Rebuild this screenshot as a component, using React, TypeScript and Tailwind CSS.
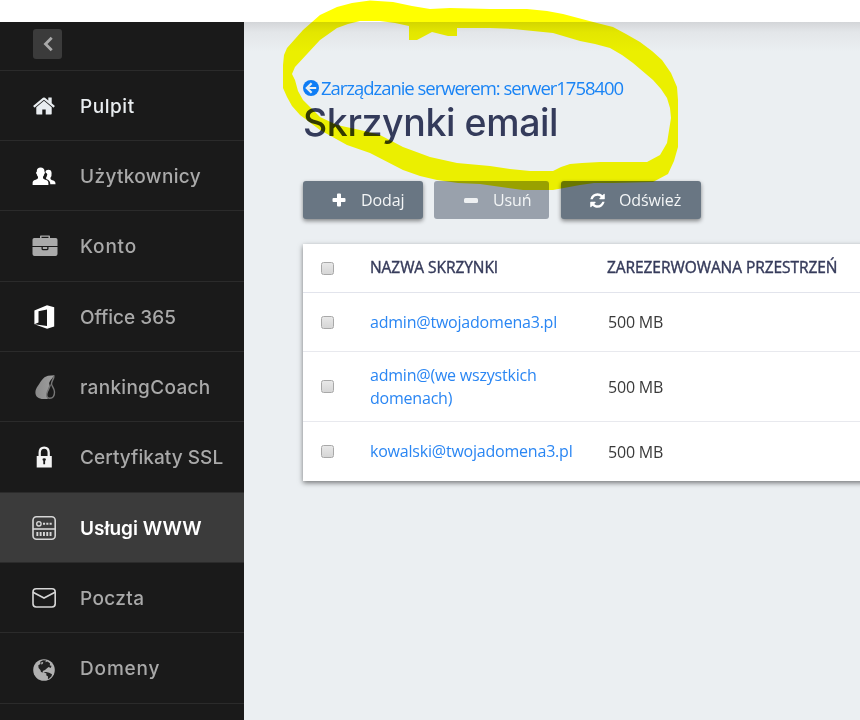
import React from 'react';

const HomeIcon = () => (
    <svg viewBox="0 0 1792 1792" className="mt-[2px] h-6 w-6" fill="#e9edf0">
        <path d="M1472 992v480q0 26-19 45t-45 19h-384v-384h-256v384h-384q-26 0-45-19t-19-45v-480q0-1 .5-3t.5-3l575-474 575 474q1 2 1 6zm223-69l-62 74q-8 9-21 11h-3q-13 0-21-7l-692-577-692 577q-12 8-24 7-13-2-21-11l-62-74q-8-10-7-23.5t11-21.5l719-599q32-26 76-26t76 26l244 204v-195q0-14 9-23t23-9h192q14 0 23 9t9 23v408l219 182q10 8 11 21.5t-7 23.5z" />
    </svg>
);

const UsersIcon = () => (
    <svg viewBox="0 0 24 24" className="h-6 w-6" fill="#fff">
        <path d="M4.8 7.2C4.8 4.600 6.200 3.400 8.600 3.400s3.900 1.200 3.900 3.800c0 .7.1.9.4 1.100.2.8-.2 1.600-.7 1.900-.2 1.200-.6 2-1.200 2.600v1.500c.6.8 1.800 1.300 3.200 1.800 1.600.6 2.200 1.500 2.200 3.300v1.600H.6v-1.600c0-1.800.6-2.700 2.200-3.300 1.400-.5 2.600-1 3.200-1.800v-1.500c-.6-.6-1-1.400-1.200-2.600-.5-.3-.9-1.100-.7-1.900.5-.2.700-.4.700-1.100z" />
        <path d="M13.400 8.200c.2-1.700 1.400-2.400 3-2.400 2.100 0 3.200 1.200 3.200 3.300 0 1-.2 1.700-.1 2.300-.2 1.100-.5 1.700-1 2.200v1.300c.6.8 1.500 1.200 2.800 1.700 1.500.6 2.200 1.400 2.200 3.400v.3h-5.200c0-2.600-1.100-3.900-2.800-4.700-.7-.3-1.200-.6-1.400-.9v-1.200c.4-.5.700-1.200.9-2.100.400-.9.300-1.500-.1-2-.6-.4-.9-.6-1.500-1.200z" />
    </svg>
);

const BriefcaseIcon = () => (
    <svg viewBox="0 0 26 24" className="h-6 w-[26px]" fill="#aaa">
        <path fillRule="evenodd" d="M8 4V2.200Q8 1.400 8.800 1.400h8.400q.8 0 .8.8V4h5.800q1.700 0 1.700 1.700V12H.5V5.700Q.5 4 2.200 4zm1.500-1.300V4h7V2.700z" />
        <path d="M.5 12.900h9v1.800q0 1.600 1.600 1.600h3.800q1.600 0 1.600-1.600v-1.800h9v7q0 2-2 2h-21q-2 0-2-2zM10.800 12.900h4.400v2h-4.400z" />
    </svg>
);

const OfficeIcon = () => (
    <svg viewBox="0 0 24 24" className="mt-px h-6 w-6" fill="#fff">
        <path d="M2.400 5.500 15 .3l7.200 2v19.200L15.100 23.700 2.400 19.200l12.600 1.700V4.400L6.500 6.200v11.300l-4.100 1.700z" />
    </svg>
);

const CoachIcon = () => (
    <svg viewBox="0 0 24 24" className="mt-px h-6 w-6">
        <defs>
            <linearGradient id="coach" x1="0" x2="1">
                <stop offset="0" stopColor="#8a8a8a" />
                <stop offset="1" stopColor="#a0a0a0" />
            </linearGradient>
        </defs>
        <path d="M22.500.3 16 .7C10.500 2.200 9 6.500 6.500 10 4 13.500 3.400 15 3.400 17.500c0 4.300 3.200 6.500 8 6.500h4.900c-1.700-1.200-2.200-3.400-1.400-6 1.200-3.500 2.700-5.500 2.300-9C17 6.500 20 4 22.500.3z" fill="url(#coach)" />
        <path d="M21.900.6c.6 2.900-2.700 5.300-2.400 8.400.2 2.300 3 4.300 3 8 0 4-2.100 6.300-4.700 6.300-2.700 0-3.600-2.300-2.800-5.300.8-2.800 2.600-4.900 3.300-8.500" fill="none" stroke="#777" strokeWidth="1.400" />
    </svg>
);

const LockIcon = () => (
    <svg viewBox="0 0 24 24" className="h-6 w-6">
        <path d="M7.700 12V7.600c0-3.200 1.700-5 4.500-5s4.500 1.800 4.500 5V12" fill="none" stroke="#f4f4f4" strokeWidth="2.300" />
        <path d="M4.700 11h15.100v11.500H4.700z" fill="#f4f4f4" />
        <path d="M10.500 14.200q0-1 1.700-1t1.700 1q0 1-.8 1.500v3.600h-1.800v-3.600q-.8-.5-.8-1.500z" fill="#1a1a1a" />
    </svg>
);

const ServerIcon = () => (
    <svg viewBox="0 0 24 24" className="mt-px h-6 w-6" fill="none" stroke="#d6d6d6">
        <rect x="1" y=".8" width="22.200" height="22.400" rx="3.500" strokeWidth="1.600" />
        <path d="M1 13h22" strokeWidth="1.600" />
        <circle cx="6.900" cy="7.800" r="2.200" strokeWidth="1.400" />
        <path d="M11 7.800h9" strokeWidth="1.900" strokeDasharray="2.100 1.200" />
        <path d="M4.400 18h15.500" strokeWidth="4" strokeDasharray="1.900 1.400" />
    </svg>
);

const MailIcon = () => (
    <svg viewBox="0 0 24 24" className="mt-px h-6 w-6" fill="none" stroke="#d6d6d6" strokeWidth="1.600">
        <rect x="1" y="2.700" width="22.200" height="18.300" rx="3.200" />
        <path d="M1 6.200 12 12 23 6.200" />
    </svg>
);

const GlobeIcon = () => (
    <svg viewBox="0 0 24 24" className="mt-px h-6 w-6">
        <circle cx="12" cy="13" r="10.800" fill="#b1b1b1" />
        <path d="M8.200 4.800 11 3.300l3.200.2-1 1.700 2.200-.6 2.600 1.700-.2 2.200 1.700.3-.7 2.200-2.200-.9-1.900 1.300-1.700 1.700-2.300.9.300 1.600-2-.5-.6-2.200-1.800-2-.3-2.600L8.500 7z" fill="#222" />
        <path d="m11.500 15.300 2.600-.3 3 .8 2.900 1.500-.5 1.900-2.600 2.600-1 .3.100-2.600-1.800-1.200.300-1.700z" fill="#222" />
        <path d="m9.300 5.300 2-.4-.7 2-1.400.6z" fill="#b1b1b1" />
    </svg>
);

const menu = [
    { label: 'Pulpit', icon: <HomeIcon />, style: 'text-[#e9edf0] tracking-[0.55px]' },
    { label: 'Użytkownicy', icon: <UsersIcon />, style: 'text-[#a9a9a9] tracking-[0.35px]' },
    { label: 'Konto', icon: <BriefcaseIcon />, style: 'text-[#a9a9a9] tracking-[0.8px]' },
    { label: 'Office 365', icon: <OfficeIcon />, style: 'text-[#a9a9a9]' },
    { label: 'rankingCoach', icon: <CoachIcon />, style: 'text-[#a9a9a9] tracking-[0.3px]' },
    { label: 'Certyfikaty SSL', icon: <LockIcon />, style: 'text-[#a9a9a9] tracking-[0.05px]' },
    { label: 'Usługi WWW', icon: <ServerIcon />, style: 'font-semibold text-white', active: true },
    { label: 'Poczta', icon: <MailIcon />, style: 'text-[#a9a9a9] tracking-[0.35px]' },
    { label: 'Domeny', icon: <GlobeIcon />, style: 'text-[#a9a9a9] tracking-[0.85px]' },
];

const mailboxes = [
    { name: 'admin@twojadomena3.pl', space: '500 MB', height: 'h-[59px]' },
    { name: 'admin@(we wszystkich domenach)', space: '500 MB', height: 'h-[70px]' },
    { name: 'kowalski@twojadomena3.pl', space: '500 MB', height: 'h-[59px]' },
];

const Checkbox = () => (
    <span className="block h-[13px] w-[13px] rounded-[2.5px] border border-[#a8a8a8] bg-linear-to-b from-[#e8e8e8] to-[#d6d6d6]" />
);

const Sidebar = () => (
    <aside className="w-[244px] shrink-0 overflow-hidden bg-[#1a1a1a]">
        <div className="h-[48.7px] border-b border-[#2b2b2b] pt-[7px] pl-[33px]">
            <button className="flex h-[30px] w-[29px] items-center justify-center rounded-[3px] bg-[#3b3b3b]">
                <svg viewBox="0 0 12 16" className="h-4 w-3" fill="none" stroke="#a9a9a9" strokeWidth="2.800">
                    <path d="M9.700 1.800 3.500 8l6.200 6.200" />
                </svg>
            </button>
        </div>
        <nav>
            {menu.map((item) => (
                <a
                    key={item.label}
                    className={`flex h-[70.35px] items-center border-b border-[#2b2b2b] pl-8 text-[19px] font-medium whitespace-nowrap ${item.active ? 'bg-[#3b3b3b]' : ''}`}
                >
                    <span className="flex w-12 shrink-0">{item.icon}</span>
                    <span className={`pt-[3px] ${item.style}`}>{item.label}</span>
                </a>
            ))}
        </nav>
    </aside>
);

const Toolbar = () => (
    <div className="mt-[39px] flex h-[38px] text-[16px] tracking-[-0.1px] text-[#f3f5f6]">
        <button className="flex w-[120px] items-center rounded-[3px] bg-[#697683] pl-[29px] shadow-[0_2px_4px_rgba(0,0,0,0.45)]">
            <svg viewBox="0 0 14 14" className="mr-[15px] h-3.5 w-3.5" fill="#fff">
                <path d="M5 1.500Q5 .5 6 .5h2q1 0 1 1V5h3.500q1 0 1 1v2q0 1-1 1H9v3.500q0 1-1 1H6q-1 0-1-1V9H1.500q-1 0-1-1V6q0-1 1-1H5z" />
            </svg>
            Dodaj
        </button>
        <button className="ml-[11px] flex w-[115px] items-center rounded-[3px] bg-[#99a1ac] pl-[30px]">
            <span className="mr-[15px] h-[5px] w-[14px] rounded-[1.5px] bg-[#eef0f2]" />
            Usuń
        </button>
        <button className="ml-[12px] flex w-[140px] items-center rounded-[3px] bg-[#697683] pl-[28px] shadow-[0_2px_4px_rgba(0,0,0,0.45)]">
            <svg viewBox="0 0 1792 1792" className="mr-[13px] h-[17px] w-[17px]" fill="#fff">
                <path d="M1639 1056q0 5-1 7-64 268-268 434.500t-478 166.500q-146 0-282.500-55t-243.500-157l-129 129q-19 19-45 19t-45-19-19-45v-448q0-26 19-45t45-19h448q26 0 45 19t19 45-19 45l-137 137q71 66 161 102t187 36q134 0 250-65t186-179q11-17 53-117 8-23 30-23h192q13 0 22.500 9.500t9.500 22.500zm25-800v448q0 26-19 45t-45 19h-448q-26 0-45-19t-19-45 19-45l138-138q-148-137-349-137-134 0-250 65t-186 179q-11 17-53 117-8 23-30 23h-199q-13 0-22.500-9.500t-9.500-22.500v-7q65-268 270-434.500t480-166.500q146 0 284 55.500t245 156.500l130-129q19-19 45-19t45 19 19 45z" />
            </svg>
            Odśwież
        </button>
    </div>
);

const MailboxTable = () => (
    <div className="mt-[25px] w-[620px] bg-white text-[16px] shadow-[0_2px_5px_rgba(0,0,0,0.5)]">
        <div className="flex h-[49px] items-center border-b border-[#e2e4ec] pl-[18px] text-[15.5px] tracking-[-0.07px] text-[#363b5b] [-webkit-text-stroke:0.4px_#363b5b]">
            <div className="w-[49px]"><Checkbox /></div>
            <div className="w-[237px]">NAZWA SKRZYNKI</div>
            <div className="whitespace-nowrap">ZAREZERWOWANA PRZESTRZEŃ</div>
        </div>
        {mailboxes.map((box) => (
            <div key={box.name} className={`flex items-center border-b border-[#e8e9ee] pl-[18px] last:border-b-0 ${box.height}`}>
                <div className="w-[49px]"><Checkbox /></div>
                <div className="w-[238px] pt-px pr-[30px] leading-[23.5px] tracking-[-0.21px] text-[#2a86f3]">{box.name}</div>
                <div className="tracking-[-0.21px] text-[#3a3a3a]">{box.space}</div>
            </div>
        ))}
    </div>
);

// Hand drawn marker loop around the page title
const MarkerLoop = () => (
    <svg viewBox="0 0 860 720" className="pointer-events-none absolute inset-0 h-full w-full mix-blend-multiply">
        <path
            fill="#ffff00"
            fillRule="evenodd"
            d="M303 30 320 15 337 7 352 3 370 0.500 393 2 412 6 430 9 450 8 490 9 527 9 547 11 563 14 597 23 613 27 626 34 640 42 652 51 662 60 671 73 677 87 678 100V147L674 161 668 174 653 182 613 183 594 183 580 185 553 190H523L480 184 458 183 437 180 420 176 403 170 370 153 347 145 320 130 300 115 292 106 287 97 283 88V65L284 55 287 48ZM292 74 295 80 298 91 303 100 320 117 337 125 360 130 380 135 403 147 430 157 457 163 490 166 510 169 530 171H553L561 167 570 164 582 163 600 162H647L660 155 667 143 671 118 670 108 667 98 661 89 653 80 633 63 622 55 610 48 595 44 580 41 553 33 513 29 490 28H457V36H448L432 32 417 40H409V26L395 23 380 21H360L348 24 337 28 320 40 295 67Z"
        />
    </svg>
);

const App: React.FC = () => {
    return (
        <div className="relative h-[720px] w-[860px] overflow-hidden bg-white pt-[22px] font-['Inter',sans-serif]">
            <div className="flex h-[698px]">
                <Sidebar />
                <main className="min-w-0 flex-1 overflow-hidden bg-[#ebeff2] bg-[linear-gradient(#d3d5d8,#e3e6e9_10px,#ebeff2_30px)] pt-[54px] pl-[59px] font-['Open_Sans',sans-serif]">
                    <a className="flex h-6 items-center text-[18.5px] tracking-[-1.03px] whitespace-nowrap text-[#1a84f5]">
                        <svg viewBox="0 0 16 16" className="mr-[2px] h-4 w-4 shrink-0">
                            <circle cx="8" cy="8" r="8" fill="#0f7df5" />
                            <path d="M8.600 3.200 3.800 8l4.800 4.800M4.200 8h9" fill="none" stroke="#ebeff2" strokeWidth="2.200" />
                        </svg>
                        Zarządzanie serwerem: serwer1758400
                    </a>
                    <h1 className="h-[42px] text-[37.5px] leading-[45px] font-medium tracking-[-0.4px] whitespace-nowrap text-[#343b5b] font-['Inter',sans-serif]">
                        Skrzynki email
                    </h1>
                    <Toolbar />
                    <MailboxTable />
                </main>
            </div>
            <MarkerLoop />
        </div>
    );
};

export default App;
